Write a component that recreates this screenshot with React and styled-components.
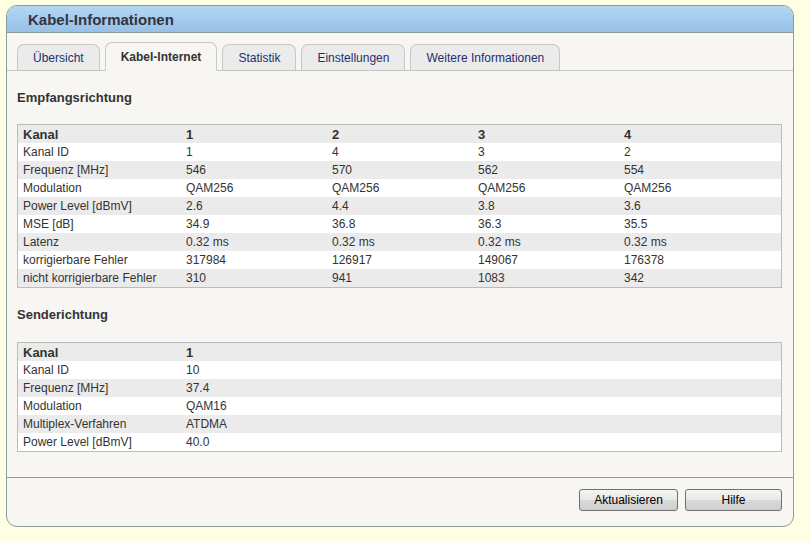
import React from "react"
import styled, { createGlobalStyle, css } from "styled-components"

const GlobalStyle = createGlobalStyle`
  html, body {
    margin: 0;
    padding: 0;
    background: #fefee2;
    font-family: "Liberation Sans", Arial, sans-serif;
  }
`

const Page = styled.div`
  padding: 5px 0 0 6px;
  height: 536px;
`

const Panel = styled.div`
  width: 786px;
  height: 520px;
  display: flex;
  flex-direction: column;
  background: #f7f6f2;
  border: 1px solid #8d9c9b;
  border-radius: 11px;
  overflow: hidden;
`

const Header = styled.div`
  height: 26px;
  display: flex;
  align-items: center;
  padding-left: 21px;
  background: linear-gradient(#b2d6f5, #98c0e6);
  border-bottom: 1px solid #8d9c9b;
  color: #333340;
  font-size: 15px;
  font-weight: bold;
`

const TabBar = styled.div`
  display: flex;
  align-items: flex-end;
  gap: 5px;
  height: 37px;
  padding-left: 10px;
  border-bottom: 1px solid #c4c4c4;
`

const Tab = styled.div`
  height: 25px;
  display: flex;
  align-items: center;
  padding: 0 15px;
  margin-bottom: -1px;
  font-size: 12px;
  color: #1e2f6e;
  background: #ebebeb;
  border: 1px solid #c8c8c8;
  border-bottom-color: #c4c4c4;
  border-radius: 7px 7px 0 0;

  ${props =>
    props.active &&
    css`
      height: 27px;
      font-weight: bold;
      color: #333;
      background: #f7f6f2;
      border-bottom-color: #f7f6f2;
    `}
`

const Content = styled.div`
  flex: 1;
  padding: 0 11px 0 10px;
`

const SectionTitle = styled.h3`
  margin: 0;
  font-size: 13px;
  font-weight: bold;
  color: #333;
  line-height: 16px;
  padding-top: ${props => props.top}px;
  padding-bottom: ${props => props.bottom}px;
`

const Table = styled.div`
  border: 1px solid #bcbcbc;
  color: #333;
`

const Row = styled.div`
  display: grid;
  grid-template-columns: 163px 146px 146px 146px 1fr;
  height: 18px;
  align-items: center;
  font-size: 12px;
  background: ${props => (props.shade ? "#ebebeb" : "#ffffff")};

  ${props =>
    props.head &&
    css`
      font-size: 13px;
      font-weight: bold;
    `}
`

const Cell = styled.div`
  padding-left: 5px;
  white-space: nowrap;
`

const Footer = styled.div`
  height: 49px;
  border-top: 1px solid #8d9c9b;
  display: flex;
  justify-content: flex-end;
  align-items: flex-start;
  gap: 7px;
  padding: 11px 11px 0 0;
  box-sizing: border-box;
`

const Button = styled.button`
  width: ${props => props.width}px;
  height: 22px;
  font-family: "Liberation Sans", Arial, sans-serif;
  font-size: 12px;
  color: #000;
  background: linear-gradient(#f4f4f4 0%, #e8e8e8 50%, #d9d9d9 51%, #cfcfcf 100%);
  border: 1px solid #707070;
  border-radius: 3px;
  padding: 0;
`

const tabs = ["Übersicht", "Kabel-Internet", "Statistik", "Einstellungen", "Weitere Informationen"]

const downstream = [
  ["Kanal", "1", "2", "3", "4"],
  ["Kanal ID", "1", "4", "3", "2"],
  ["Frequenz [MHz]", "546", "570", "562", "554"],
  ["Modulation", "QAM256", "QAM256", "QAM256", "QAM256"],
  ["Power Level [dBmV]", "2.6", "4.4", "3.8", "3.6"],
  ["MSE [dB]", "34.9", "36.8", "36.3", "35.5"],
  ["Latenz", "0.32 ms", "0.32 ms", "0.32 ms", "0.32 ms"],
  ["korrigierbare Fehler", "317984", "126917", "149067", "176378"],
  ["nicht korrigierbare Fehler", "310", "941", "1083", "342"],
]

const upstream = [
  ["Kanal", "1"],
  ["Kanal ID", "10"],
  ["Frequenz [MHz]", "37.4"],
  ["Modulation", "QAM16"],
  ["Multiplex-Verfahren", "ATDMA"],
  ["Power Level [dBmV]", "40.0"],
]

function DataTable({ rows }) {
  return (
    <Table>
      {rows.map((r, i) => (
        <Row key={i} head={i === 0} shade={i % 2 === 0}>
          {r.map((c, j) => (
            <Cell key={j}>{c}</Cell>
          ))}
        </Row>
      ))}
    </Table>
  )
}

export default function App() {
  return (
    <>
      <GlobalStyle />
      <Page>
        <Panel>
          <Header>Kabel-Informationen</Header>
          <TabBar>
            {tabs.map(t => (
              <Tab key={t} active={t === "Kabel-Internet"}>
                {t}
              </Tab>
            ))}
          </TabBar>
          <Content>
            <SectionTitle top={19} bottom={18}>
              Empfangsrichtung
            </SectionTitle>
            <DataTable rows={downstream} />
            <SectionTitle top={19} bottom={19}>
              Senderichtung
            </SectionTitle>
            <DataTable rows={upstream} />
          </Content>
          <Footer>
            <Button width={99}>Aktualisieren</Button>
            <Button width={97}>Hilfe</Button>
          </Footer>
        </Panel>
      </Page>
    </>
  )
}
